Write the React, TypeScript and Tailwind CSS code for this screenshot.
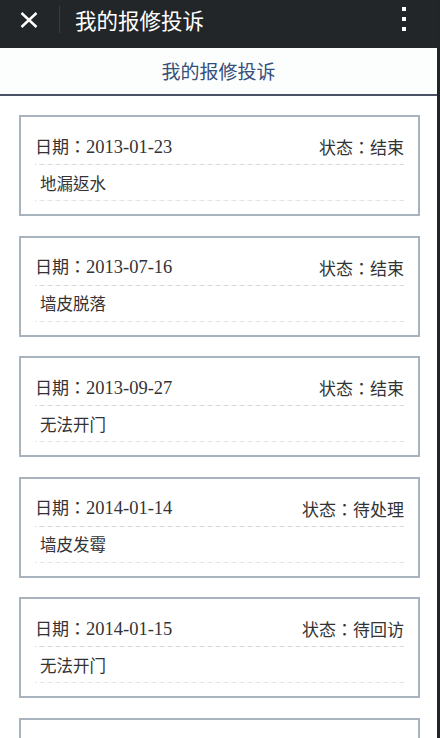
const records = [
    { date: '2013-01-23', status: '结束', content: '地漏返水' },
    { date: '2013-07-16', status: '结束', content: '墙皮脱落' },
    { date: '2013-09-27', status: '结束', content: '无法开门' },
    { date: '2014-01-14', status: '待处理', content: '墙皮发霉' },
    { date: '2014-01-15', status: '待回访', content: '无法开门' },
    { date: '2014-02-03', status: '待处理', content: '水管漏水' },
];

const cjk = { fontFamily: '"Noto Sans CJK TC", "Noto Sans CJK SC", sans-serif' };
const serif = { fontFamily: '"Liberation Serif", "Noto Sans CJK TC", serif' };

const App = () => {
    return <div className="flex h-[738px] w-[440px] overflow-hidden bg-[#222528]">
        <div className="flex w-[437px] flex-col bg-white">
            <div className="relative flex h-[48px] shrink-0 items-center bg-[#232629] pb-[9px]">
                <svg width="18" height="16" viewBox="0 0 18 16" className="ml-[20px]">
                    <path d="M1.5 1 L16.5 15 M16.5 1 L1.5 15" stroke="#ffffff" strokeWidth="2.4" />
                </svg>
                <div className="ml-[21px] h-[27px] w-px bg-[#3a3e43]" />
                <div className="ml-[15px] text-[21.5px] leading-none text-white" style={cjk}>我的报修投诉</div>
                <div className="absolute right-[31px] top-[7px] flex flex-col gap-[6px]">
                    <div className="h-[4px] w-[4px] bg-white" />
                    <div className="h-[4px] w-[4px] bg-white" />
                    <div className="h-[4px] w-[4px] bg-white" />
                </div>
            </div>
            <div className="flex h-[48px] shrink-0 items-center justify-center border-b-2 border-[#4b5266] bg-[#fcfefe] text-[19px] text-[#35507a]" style={cjk}>
                我的报修投诉
            </div>
            <div className="flex flex-col gap-[19.5px] pt-[19px]">
                {records.map((r, i) => (
                    <div key={i} className="ml-[19px] w-[401px] shrink-0 border-2 border-[#a9b3be] bg-white px-[14px] pb-[13px] pt-[12px] text-[17px] text-[#333333]" style={cjk}>
                        <div className="flex h-[36px] items-center justify-between bg-[linear-gradient(to_right,#d9d9d9_62%,transparent_0)] bg-[length:8px_1px] bg-bottom bg-repeat-x">
                            <span>日期：<span className="text-[18.5px]" style={serif}>{r.date}</span></span>
                            <span>状态：{r.status}</span>
                        </div>
                        <div className="flex h-[36px] items-center bg-[linear-gradient(to_right,#e3e3e3_62%,transparent_0)] bg-[length:8px_1px] bg-bottom bg-repeat-x pl-[5px] text-[16.5px]">
                            {r.content}
                        </div>
                    </div>
                ))}
            </div>
        </div>
    </div>
}

export default App
